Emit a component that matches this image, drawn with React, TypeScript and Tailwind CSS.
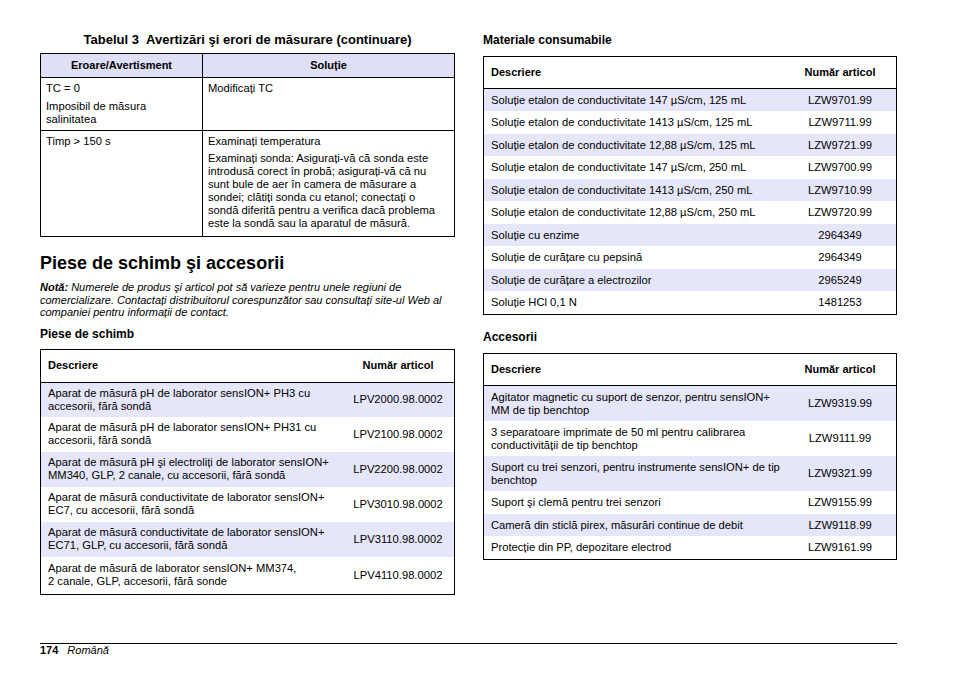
import React from "react";

const font = { fontFamily: '"Liberation Sans", Arial, sans-serif' };

type Row = { d: React.ReactNode; n: string; h: string };

function PartsTable({
  rows,
  headH,
  colW,
}: {
  rows: Row[];
  headH: string;
  colW: string;
}) {
  return (
    <div className="border border-black">
      <div className={`flex items-center border-b border-black ${headH} text-[11px] font-bold`}>
        <div className="flex-1 pl-[7px]">Descriere</div>
        <div className={`${colW} text-center`}>Număr articol</div>
      </div>
      {rows.map((r, i) => (
        <div
          key={i}
          className={`flex items-center ${r.h} text-[11.2px] leading-[13px] ${i % 2 === 0 ? "bg-[#e6e6fa]" : "bg-white"}`}
        >
          <div className="flex-1 pl-[7px] whitespace-nowrap">{r.d}</div>
          <div className={`${colW} shrink-0 text-center`}>{r.n}</div>
        </div>
      ))}
    </div>
  );
}

export default function App() {
  const piese: Row[] = [
    { d: <>Aparat de măsură pH de laborator sensION+ PH3 cu<br />accesorii, fără sondă</>, n: "LPV2000.98.0002", h: "h-[34px]" },
    { d: <>Aparat de măsură pH de laborator sensION+ PH31 cu<br />accesorii, fără sondă</>, n: "LPV2100.98.0002", h: "h-[35px]" },
    { d: <>Aparat de măsură pH şi electroliți de laborator sensION+<br />MM340, GLP, 2 canale, cu accesorii, fără sondă</>, n: "LPV2200.98.0002", h: "h-[35px]" },
    { d: <>Aparat de măsură conductivitate de laborator sensION+<br />EC7, cu accesorii, fără sondă</>, n: "LPV3010.98.0002", h: "h-[35px]" },
    { d: <>Aparat de măsură conductivitate de laborator sensION+<br />EC71, GLP, cu accesorii, fără sondă</>, n: "LPV3110.98.0002", h: "h-[35px]" },
    { d: <>Aparat de măsură de laborator sensION+ MM374,<br />2 canale, GLP, accesorii, fără sonde</>, n: "LPV4110.98.0002", h: "h-[37px]" },
  ];
  const cons: Row[] = [
    ["Soluție etalon de conductivitate 147 µS/cm, 125 mL", "LZW9701.99"],
    ["Soluție etalon de conductivitate 1413 µS/cm, 125 mL", "LZW9711.99"],
    ["Soluție etalon de conductivitate 12,88 µS/cm, 125 mL", "LZW9721.99"],
    ["Soluție etalon de conductivitate 147 µS/cm, 250 mL", "LZW9700.99"],
    ["Soluție etalon de conductivitate 1413 µS/cm, 250 mL", "LZW9710.99"],
    ["Soluție etalon de conductivitate 12,88 µS/cm, 250 mL", "LZW9720.99"],
    ["Soluție cu enzime", "2964349"],
    ["Soluție de curățare cu pepsină", "2964349"],
    ["Soluție de curățare a electrozilor", "2965249"],
    ["Soluție HCl 0,1 N", "1481253"],
  ].map(([d, n], i) => ({ d, n, h: i % 2 === 0 ? "h-[22px]" : "h-[23px]" }));
  const acc: Row[] = [
    { d: <>Agitator magnetic cu suport de senzor, pentru sensION+<br />MM de tip benchtop</>, n: "LZW9319.99", h: "h-[35px]" },
    { d: <>3 separatoare imprimate de 50 ml pentru calibrarea<br />conductivității de tip benchtop</>, n: "LZW9111.99", h: "h-[35px]" },
    { d: <>Suport cu trei senzori, pentru instrumente sensION+ de tip<br />benchtop</>, n: "LZW9321.99", h: "h-[35px]" },
    { d: "Suport şi clemă pentru trei senzori", n: "LZW9155.99", h: "h-[23px]" },
    { d: "Cameră din sticlă pirex, măsurări continue de debit", n: "LZW9118.99", h: "h-[22px]" },
    { d: "Protecție din PP, depozitare electrod", n: "LZW9161.99", h: "h-[23px]" },
  ];

  return (
    <div className="w-[954px] h-[673px] bg-white text-black flex flex-col" style={font}>
      <div className="flex gap-[28px] pl-[40px] pt-[33px] h-[610px]">
        {/* Left column */}
        <div className="w-[415px] flex flex-col">
          <div className="text-[13px] leading-[14px] font-bold text-center h-[20px]">
            Tabelul 3&nbsp;&nbsp;Avertizări şi erori de măsurare (continuare)
          </div>
          <div className="border border-black text-[11.2px] leading-[13px]">
            <div className="flex h-[24px] bg-[#dfdff7] border-b border-black text-[11px] font-bold">
              <div className="w-[162px] border-r border-black flex items-center justify-center">Eroare/Avertisment</div>
              <div className="flex-1 flex items-center justify-center">Soluție</div>
            </div>
            <div className="flex h-[53px] border-b border-black">
              <div className="w-[162px] border-r border-black pl-[5px] pt-[4px]">
                <div>TC = 0</div>
                <div className="mt-[5px]">Imposibil de măsura<br />salinitatea</div>
              </div>
              <div className="flex-1 pl-[5px] pt-[4px]">Modificați TC</div>
            </div>
            <div className="flex h-[105px]">
              <div className="w-[162px] border-r border-black pl-[5px] pt-[4px]">Timp &gt; 150 s</div>
              <div className="flex-1 pl-[5px] pt-[4px]">
                <div>Examinați temperatura</div>
                <div className="mt-[4px]">
                  Examinați sonda: Asigurați-vă că sonda este<br />
                  introdusă corect în probă; asigurați-vă că nu<br />
                  sunt bule de aer în camera de măsurare a<br />
                  sondei; clătiți sonda cu etanol; conectați o<br />
                  sondă diferită pentru a verifica dacă problema<br />
                  este la sondă sau la aparatul de măsură.
                </div>
              </div>
            </div>
          </div>
          <div className="text-[18px] leading-[20px] font-bold mt-[16px]">Piese de schimb şi accesorii</div>
          <div className="text-[11px] leading-[12.5px] italic mt-[8px]">
            <span className="font-bold">Notă:</span> Numerele de produs şi articol pot să varieze pentru unele regiuni de<br />
            comercializare. Contactați distribuitorul corespunzător sau consultați site-ul Web al<br />
            companiei pentru informații de contact.
          </div>
          <div className="text-[12px] leading-[14px] font-bold mt-[8px]">Piese de schimb</div>
          <div className="mt-[8px]">
            <PartsTable rows={piese} headH="h-[33px]" colW="w-[112px]" />
          </div>
        </div>

        {/* Right column */}
        <div className="w-[414px] flex flex-col">
          <div className="text-[12px] leading-[14px] font-bold h-[23px]">Materiale consumabile</div>
          <PartsTable rows={cons} headH="h-[32px]" colW="w-[112px]" />
          <div className="text-[12px] leading-[14px] font-bold mt-[15px] h-[23px]">Accesorii</div>
          <PartsTable rows={acc} headH="h-[32px]" colW="w-[112px]" />
        </div>
      </div>
      <div className="ml-[40px] w-[857px] border-t border-black mt-[33px] text-[11px] leading-[12px]">
        <span className="font-bold">174</span>
        <span className="italic ml-[9px]">Română</span>
      </div>
    </div>
  );
}
